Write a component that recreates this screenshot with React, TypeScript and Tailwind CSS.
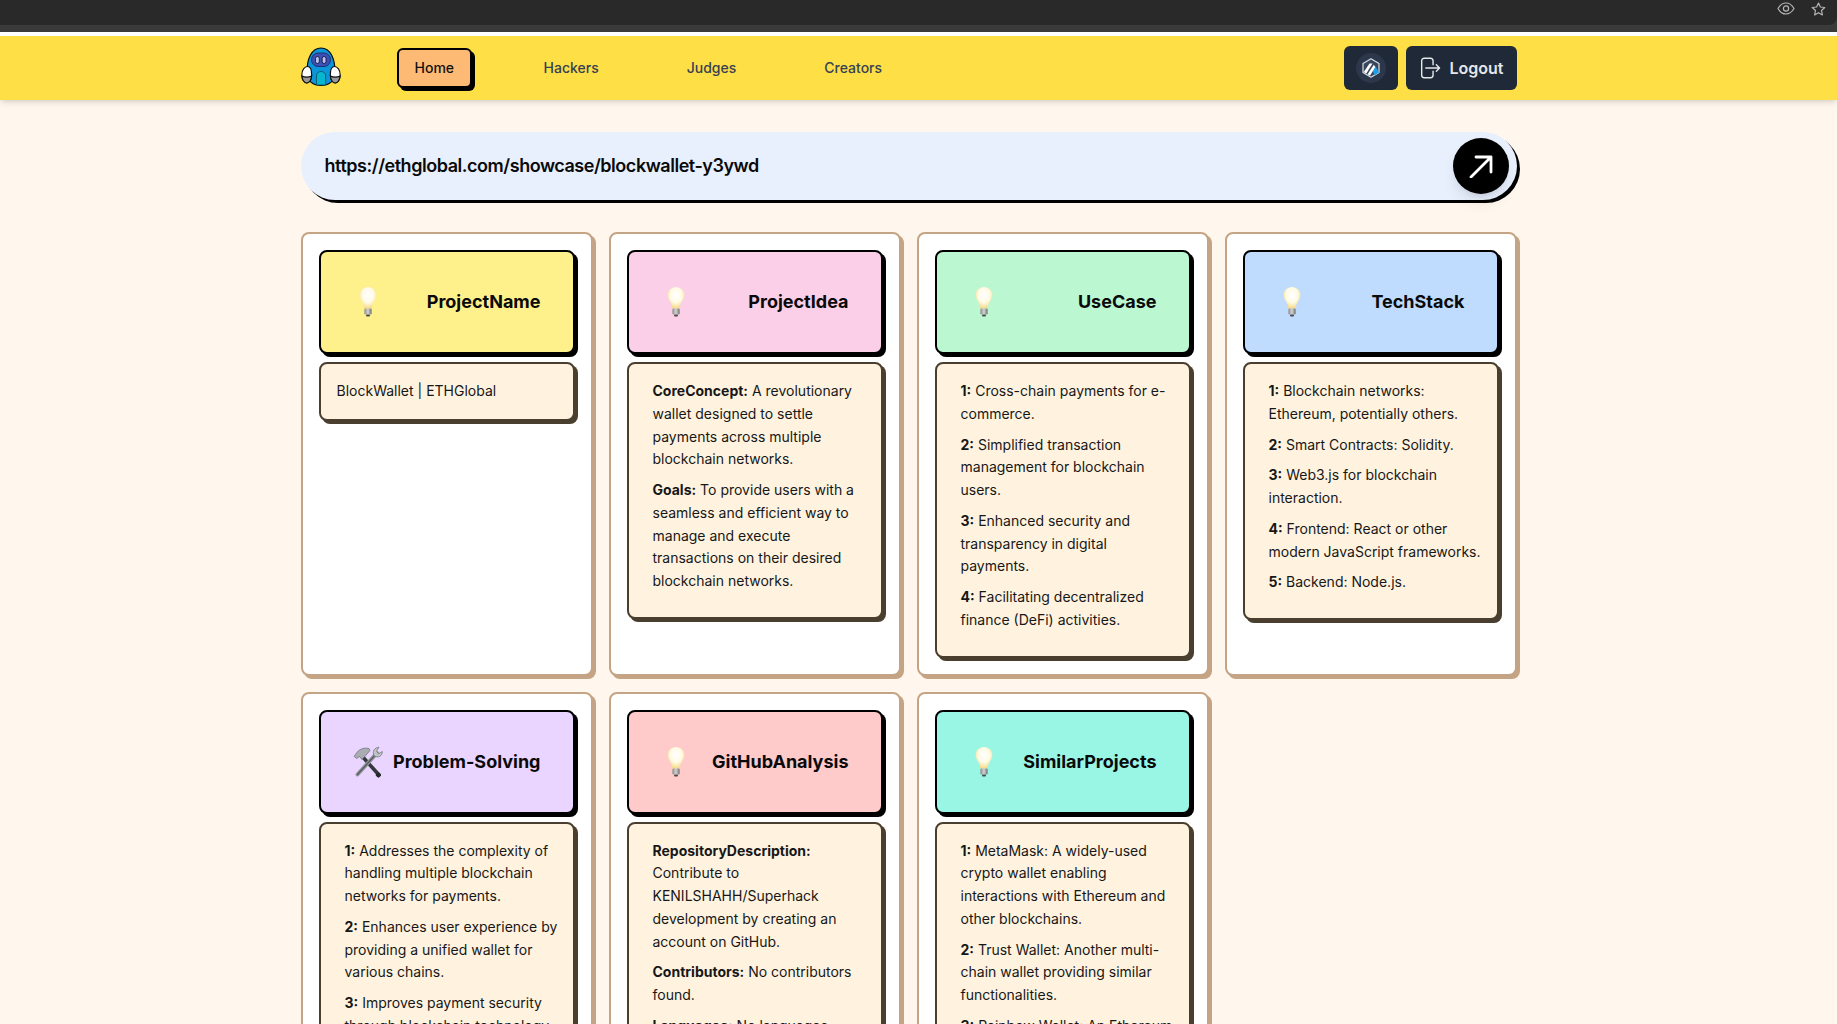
import React from "react";

const Bulb = () => (
  <svg width="30" height="36" viewBox="0 0 30 36" className="block">
    <defs>
      <radialGradient id="bulbGlow" cx="50%" cy="38%" r="62%">
        <stop offset="0%" stopColor="#ffffff" />
        <stop offset="55%" stopColor="#fffbe6" />
        <stop offset="100%" stopColor="#f6d985" />
      </radialGradient>
      <linearGradient id="bulbBase" x1="0" y1="0" x2="1" y2="0">
        <stop offset="0%" stopColor="#8a8a8a" />
        <stop offset="50%" stopColor="#d4d4d4" />
        <stop offset="100%" stopColor="#6e6e6e" />
      </linearGradient>
    </defs>
    <path d="M15 3c-5 0-8.400 3.600-8.400 8.100 0 3.600 2.200 5.700 3.500 8.300.7 1.400 1 3.200 1.100 5.100h7.600c.1-1.900.4-3.700 1.100-5.100 1.300-2.600 3.500-4.700 3.500-8.300C23.400 6.600 20 3 15 3z" fill="url(#bulbGlow)" />
    <rect x="11.400" y="24.500" width="7.200" height="6" rx="1.200" fill="url(#bulbBase)" />
    <rect x="13" y="30.500" width="4" height="2" rx="1" fill="#4b4b4b" />
  </svg>
);

const Tools = () => (
  <svg width="30" height="36" viewBox="0 0 30 36" className="block">
    <path d="M8 11 L26 31" stroke="#34383c" strokeWidth="3.600" strokeLinecap="round" />
    <path d="M24 9 L4.500 30.500" stroke="#8f9398" strokeWidth="3.800" strokeLinecap="round" />
    <path d="M24 9 L4.500 30.500" stroke="#5b5f64" strokeWidth="1.400" strokeLinecap="round" />
    <path d="M2.500 10.500 C5 5.500 10.500 3.200 16 4.500 L17 6.500 L14 10 L11.500 12.800 L9 15.500 L6.500 12.500 L3.800 14.500 L1 12.300 Z" fill="#a9adb2" stroke="#6a6e73" strokeWidth="0.700" />
    <path d="M21 11.500 C19 7.500 21.500 3.500 26 3.200 L23.500 7 L25.500 9.800 L29.300 7.500 C29.500 12 25 14.800 21 11.500 Z" fill="#c0c4c8" stroke="#6a6e73" strokeWidth="0.700" />
    <rect x="23" y="28.500" width="4.500" height="4.500" rx="1.200" fill="#26292c" transform="rotate(42 25 31)" />
  </svg>
);

const Logo = () => (
  <svg width="40" height="40" viewBox="0 0 40 40" className="block overflow-visible">
    <path d="M6 26 C5.500 10 11 0 20 0 C29 0 34.500 10 34 26 C33.500 33 28 37.500 20 37.500 C12 37.500 6.500 33 6 26 Z" fill="#0c95d8" stroke="#0b0b0b" strokeWidth="1.200" />
    <rect x="10.500" y="5" width="19" height="13.500" rx="6.500" fill="#3c4fb4" stroke="#17245f" strokeWidth="0.800" />
    <rect x="14.500" y="8.500" width="3.800" height="7" rx="1.900" fill="#b8c4ee" stroke="#0b0b2e" strokeWidth="0.800" />
    <rect x="21.200" y="8.500" width="3.800" height="7" rx="1.900" fill="#b8c4ee" stroke="#0b0b2e" strokeWidth="0.800" />
    <path d="M15.500 37 V28 C15.500 22 24.700 22 24.700 28 V37 Z" fill="#08b6d0" stroke="#0a4d5c" strokeWidth="0.800" />
    <path d="M0.800 27 C0.800 22 3.500 18.500 6.500 18.500 C9.500 18.500 10.700 22 10.700 27 C10.700 31 8.500 35 5.800 35 C3 35 0.800 31 0.800 27 Z" fill="#ffffff" stroke="#0b0b0b" strokeWidth="1.100" />
    <path d="M0.900 28 C3.500 29.500 8 29.500 10.600 28 C10.400 31.500 8.500 35 5.800 35 C3 35 1.100 31.500 0.900 28 Z" fill="#9a9a9a" stroke="#0b0b0b" strokeWidth="1.100" />
    <path d="M39.200 27 C39.200 22 36.500 18.500 33.500 18.500 C30.500 18.500 29.300 22 29.300 27 C29.300 31 31.500 35 34.200 35 C37 35 39.200 31 39.200 27 Z" fill="#ffffff" stroke="#0b0b0b" strokeWidth="1.100" />
    <path d="M39.100 28 C36.500 29.500 32 29.500 29.400 28 C29.600 31.500 31.500 35 34.200 35 C37 35 38.900 31.500 39.100 28 Z" fill="#9a9a9a" stroke="#0b0b0b" strokeWidth="1.100" />
  </svg>
);

const Arbitrum = () => (
  <svg width="30" height="30" viewBox="0 0 30 30" className="block">
    <circle cx="15" cy="15" r="15" fill="#2d374b" />
    <path d="M15 5.800 L23 10.400 V19.600 L15 24.200 L7 19.600 V10.400 Z" fill="#39465c" stroke="#d9dee6" strokeWidth="1.200" strokeLinejoin="round" />
    <path d="M16 17 L19.200 12.800 L23 19.400 L18.800 22.200 Z" fill="#1b9fe8" />
    <path d="M7.800 19 L13.500 10.400 H16.500 L10.300 20.500 Z" fill="#ffffff" />
    <path d="M11.600 21.300 L17.800 11.800 L19.200 14 L14 22.800 Z" fill="#ffffff" />
  </svg>
);

type Row = { label: string; text: string };
type CardData = {
  title: string;
  color: string;
  icon: "bulb" | "tools";
  plain?: string;
  rows?: Row[];
};

const cards: CardData[] = [
  { title: "ProjectName", color: "bg-[#fef08a]", icon: "bulb", plain: "BlockWallet | ETHGlobal" },
  {
    title: "ProjectIdea",
    color: "bg-[#fbcfe8]",
    icon: "bulb",
    rows: [
      { label: "CoreConcept:", text: "A revolutionary wallet designed to settle payments across multiple blockchain networks." },
      { label: "Goals:", text: "To provide users with a seamless and efficient way to manage and execute transactions on their desired blockchain networks." },
    ],
  },
  {
    title: "UseCase",
    color: "bg-[#bbf7d0]",
    icon: "bulb",
    rows: [
      { label: "1:", text: "Cross-chain payments for e-commerce." },
      { label: "2:", text: "Simplified transaction management for blockchain users." },
      { label: "3:", text: "Enhanced security and transparency in digital payments." },
      { label: "4:", text: "Facilitating decentralized finance (DeFi) activities." },
    ],
  },
  {
    title: "TechStack",
    color: "bg-[#bfdbfe]",
    icon: "bulb",
    rows: [
      { label: "1:", text: "Blockchain networks: Ethereum, potentially others." },
      { label: "2:", text: "Smart Contracts: Solidity." },
      { label: "3:", text: "Web3.js for blockchain interaction." },
      { label: "4:", text: "Frontend: React or other modern JavaScript frameworks." },
      { label: "5:", text: "Backend: Node.js." },
    ],
  },
  {
    title: "Problem-Solving",
    color: "bg-[#e9d5ff]",
    icon: "tools",
    rows: [
      { label: "1:", text: "Addresses the complexity of handling multiple blockchain networks for payments." },
      { label: "2:", text: "Enhances user experience by providing a unified wallet for various chains." },
      { label: "3:", text: "Improves payment security through blockchain technology." },
    ],
  },
  {
    title: "GitHubAnalysis",
    color: "bg-[#fecaca]",
    icon: "bulb",
    rows: [
      { label: "RepositoryDescription:", text: "Contribute to KENILSHAHH/Superhack development by creating an account on GitHub." },
      { label: "Contributors:", text: "No contributors found." },
      { label: "Languages:", text: "No languages found." },
    ],
  },
  {
    title: "SimilarProjects",
    color: "bg-[#99f6e4]",
    icon: "bulb",
    rows: [
      { label: "1:", text: "MetaMask: A widely-used crypto wallet enabling interactions with Ethereum and other blockchains." },
      { label: "2:", text: "Trust Wallet: Another multi-chain wallet providing similar functionalities." },
      { label: "3:", text: "Rainbow Wallet: An Ethereum wallet." },
    ],
  },
];

function Card({ card }: { card: CardData }) {
  return (
    <div className="rounded-lg border-2 border-[#c4a484] bg-white p-4 shadow-[3px_3px_0_#c4a484]">
      <div className={`mb-2 flex items-center justify-between rounded-lg border-2 border-black p-8 shadow-[3px_3px_0_#000] ${card.color}`}>
        {card.icon === "bulb" ? <Bulb /> : <Tools />}
        <h3 className="text-lg leading-7 font-bold text-[#0a0a0a]">{card.title}</h3>
      </div>
      <div className="rounded-lg border-2 border-[#4a3f2f] bg-[#fff3e0] p-4 text-sm leading-[22.75px] text-[#171717] shadow-[3px_3px_0_#4a3f2f]">
        {card.plain ? (
          <p>{card.plain}</p>
        ) : (
          <div className="-mr-1 pl-2">
            {card.rows!.map((r) => (
              <p key={r.label} className="mb-2">
                <strong className="font-bold">{r.label}</strong> {r.text}
              </p>
            ))}
          </div>
        )}
      </div>
    </div>
  );
}

export default function App() {
  return (
    <div className="h-[1024px] overflow-hidden bg-[#fff7ed] font-['Inter',sans-serif]">
      <div className="bg-[#3a3a3a]">
        <div className="flex h-[25px] items-start justify-end gap-4 rounded-br-lg bg-[#292929] pt-0.5 pr-[11px] text-[#b5b5b5]">
          <svg width="18" height="13" viewBox="0 0 18 13" fill="none" stroke="currentColor" strokeWidth="1.200">
            <path d="M1 6.500C3 3 5.800 1 9 1s6 2 8 5.500C15 10 12.200 12 9 12S3 10 1 6.500Z" />
            <circle cx="9" cy="6.500" r="2.600" />
          </svg>
          <svg width="15" height="14" viewBox="0 0 15 14" fill="none" stroke="currentColor" strokeWidth="1.200" strokeLinejoin="round">
            <path d="M7.500 1l1.900 4 4.400.5-3.300 3 .9 4.400-3.900-2.200-3.900 2.200.9-4.400-3.300-3 4.400-.5z" />
          </svg>
        </div>
        <div className="h-[7px]" />
      </div>
      <div className="h-1 bg-white" />
      <div className="relative z-10 h-16 bg-[#ffdf46] shadow-md">
        <div className="flex h-full w-[1817px] items-center">
          <div className="mx-auto flex w-full max-w-7xl items-center justify-between px-8">
            <div className="flex items-center">
              <Logo />
              <nav className="ml-14 flex items-center gap-[52px] text-sm font-medium text-gray-700">
                <a className="rounded-md border-2 border-black bg-[#fdba74] px-4 py-2 text-[#111] shadow-[3px_3px_0_#000]">Home</a>
                <a className="ml-[1.5px] px-[18px] py-2.5">Hackers</a>
                <a className="px-[18px] py-2.5">Judges</a>
                <a className="px-[18px] py-2.5">Creators</a>
              </nav>
            </div>
            <div className="flex items-center gap-2">
              <button className="flex h-11 w-[54px] items-center justify-center rounded-md bg-[#1f2937]">
                <Arbitrum />
              </button>
              <button className="flex h-11 items-center gap-2 rounded-md bg-[#1f2937] pr-[13px] pl-2.5 text-base font-semibold text-[#e5e7eb]">
                <svg width="26" height="26" viewBox="0 0 24 24" fill="none" stroke="currentColor" strokeWidth="1.300" strokeLinecap="round" strokeLinejoin="round">
                  <path d="M15.750 9V5.250A2.250 2.250 0 0 0 13.500 3h-6a2.250 2.250 0 0 0-2.250 2.250v13.500A2.250 2.250 0 0 0 7.500 21h6a2.250 2.250 0 0 0 2.250-2.250V15m3 0 3-3m0 0-3-3m3 3H9" />
                </svg>
                Logout
              </button>
            </div>
          </div>
        </div>
      </div>
      <div className="w-[1817px]">
        <main className="mx-auto max-w-7xl px-8 pt-8">
          <div className="mb-8 flex h-[68px] items-center justify-between rounded-full bg-[#e8f0fe] pr-2 pl-6 shadow-[3px_3px_0_#000]">
            <span className="text-lg font-semibold tracking-[-0.46px] text-[#0a0a0a]">https://ethglobal.com/showcase/blockwallet-y3ywd</span>
            <button className="flex h-14 w-14 items-center justify-center rounded-full bg-black shadow-lg">
              <svg width="24" height="24" viewBox="0 0 24 24" fill="none" stroke="#fff" strokeWidth="2.800" strokeLinecap="round" strokeLinejoin="round">
                <path d="M2 23 22 3M7 3h15v15" />
              </svg>
            </button>
          </div>
          <div className="grid grid-cols-4 items-stretch gap-4">
            {cards.map((c) => (
              <Card key={c.title} card={c} />
            ))}
          </div>
        </main>
      </div>
    </div>
  );
}
